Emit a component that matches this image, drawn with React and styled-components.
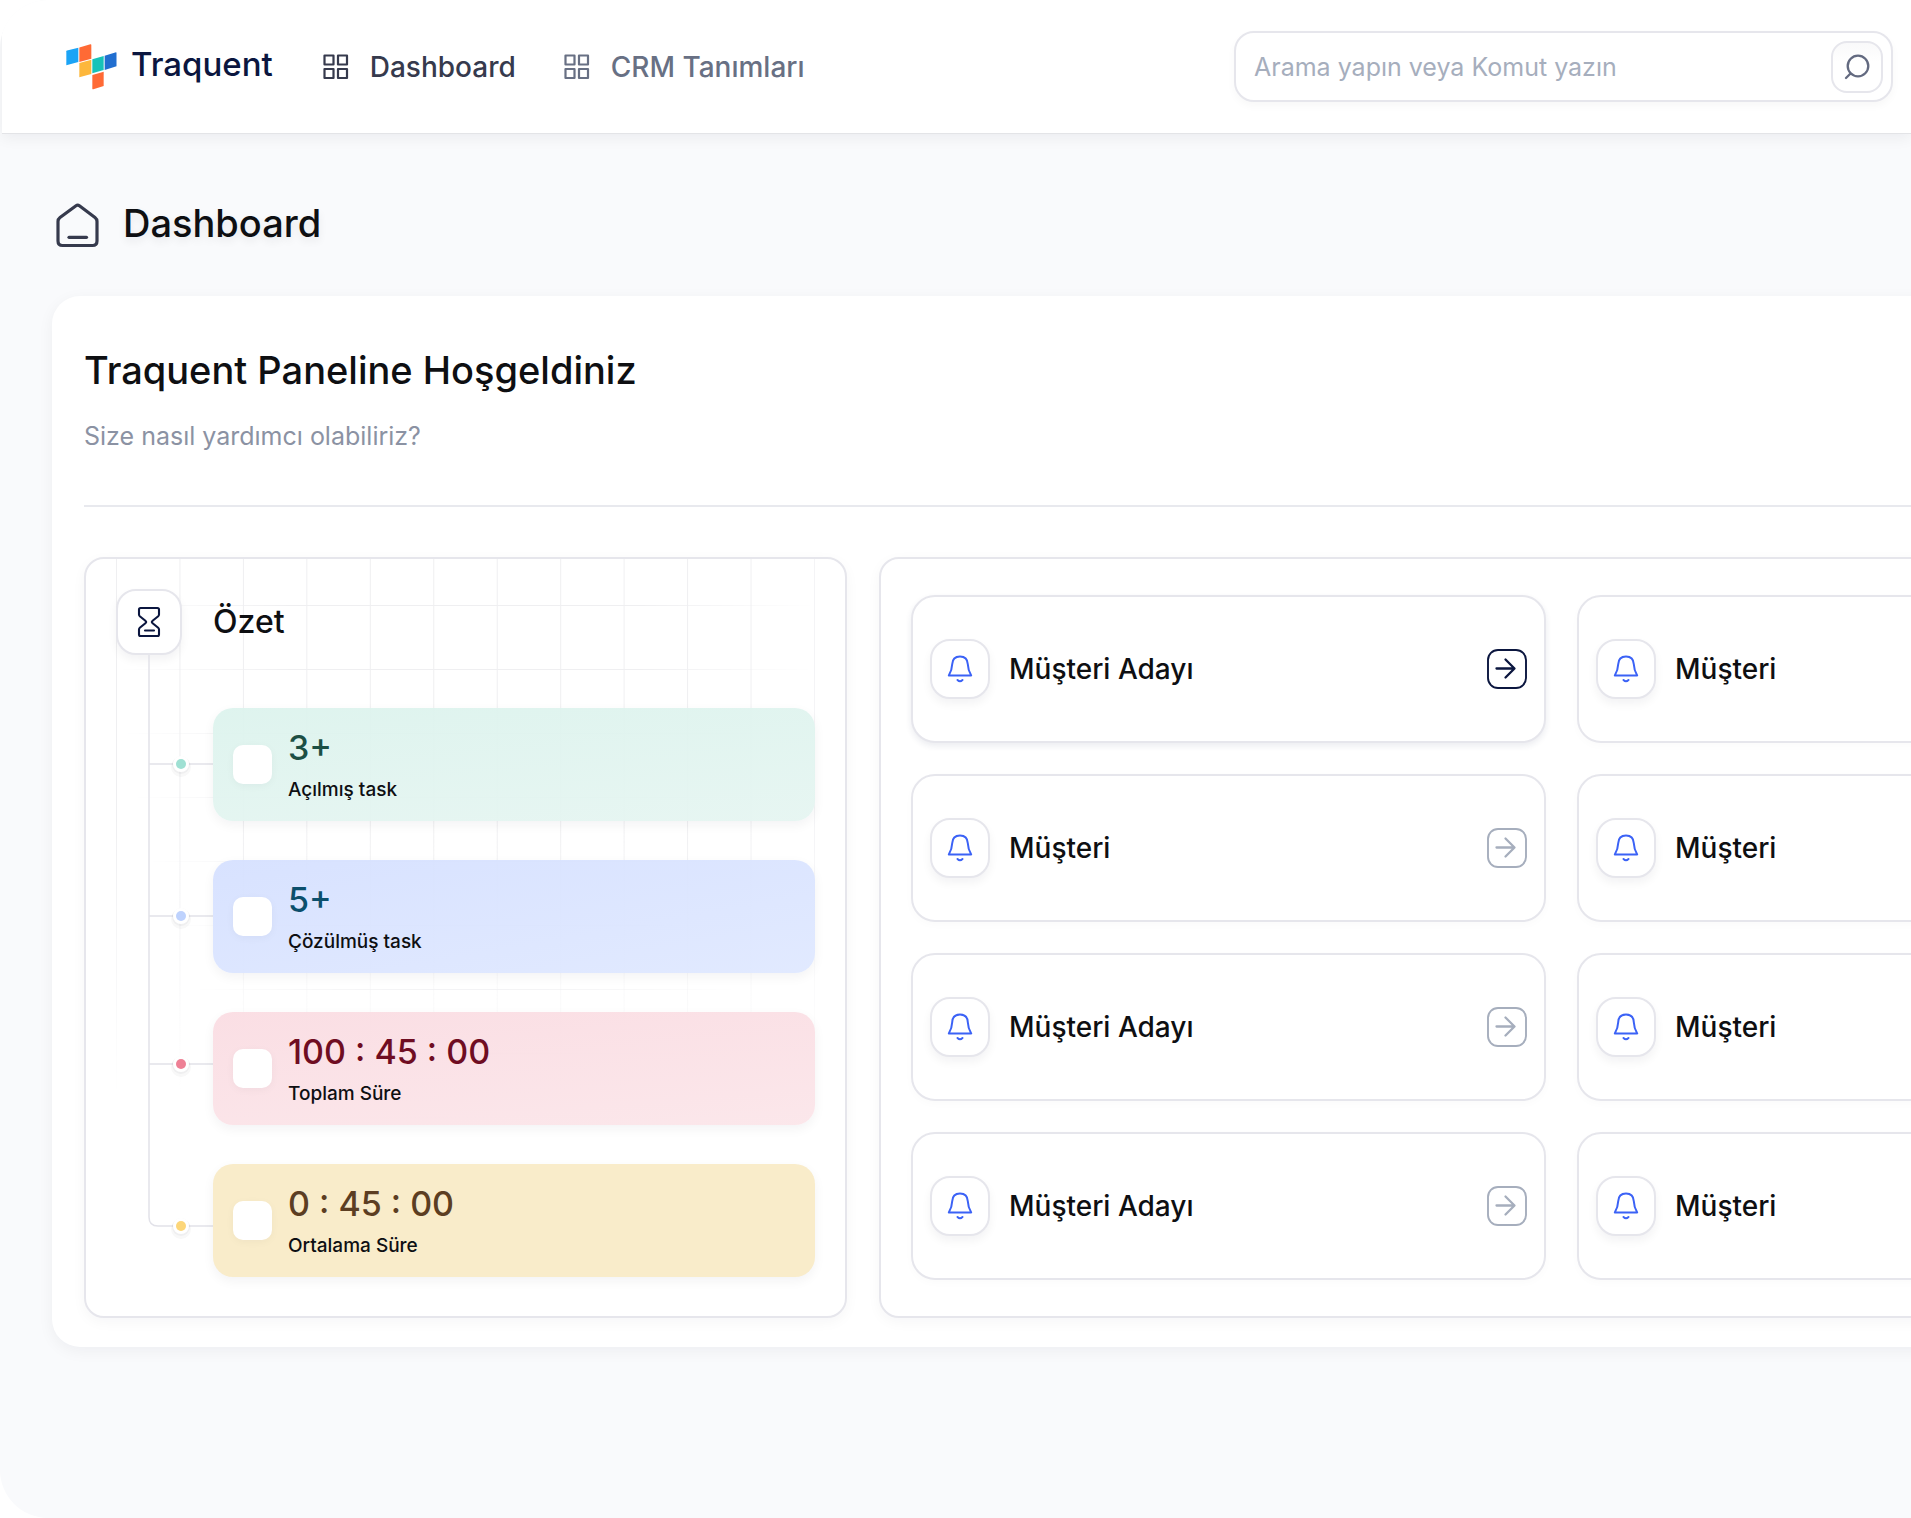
import React from "react";
import styled, { createGlobalStyle } from "styled-components";

const GlobalStyle = createGlobalStyle`
  *, *::before, *::after { box-sizing: border-box; }
  body {
    margin: 0;
    background: #ffffff;
    color: #0e0f12;
    font-family: Inter, "Liberation Sans", sans-serif;
    font-weight: 500;
  }
  h1, h2, h3, p, ul { margin: 0; padding: 0; font-weight: 500; }
  ul { list-style: none; }
  a { color: inherit; text-decoration: none; }
  svg { display: block; flex: none; }
`;

const Shell = styled.div`
  min-height: 100vh;
  overflow: hidden;
  border-radius: 48px 0 0 48px;
  background: #f9fafc;
`;

const Header = styled.header`
  display: flex;
  align-items: center;
  height: 134px;
  margin-left: 2px;
  padding: 0 18px 0 64px;
  background: #ffffff;
  border-bottom: 1px solid #e3e4e7;
  box-shadow: 0 4px 14px rgba(20, 24, 40, 0.06);
`;

const Brand = styled.a`
  display: flex;
  align-items: flex-start;
  gap: 14px;
  color: #0b163f;
  font-size: 33px;
  line-height: 40px;
`;

const Nav = styled.nav`
  display: flex;
  gap: 48px;
  margin-left: 50px;
`;

const NavLink = styled.a`
  display: flex;
  align-items: center;
  gap: 21px;
  font-size: 28px;
  line-height: 36px;
  color: ${(p) => (p.$active ? "#363a4d" : "#687084")};
`;

const Search = styled.form`
  display: flex;
  align-items: center;
  width: 659px;
  height: 71px;
  margin-left: auto;
  padding: 0 8px 0 18px;
  border: 2px solid #e6e6ec;
  border-radius: 20px;
  background: #ffffff;
  box-shadow: 0 4px 8px rgba(20, 24, 40, 0.03);
`;

const SearchInput = styled.input`
  flex: 1;
  min-width: 0;
  padding: 0;
  border: 0;
  outline: 0;
  background: transparent;
  color: #363a4d;
  font: 400 25px/36px Inter, "Liberation Sans", sans-serif;
  &::placeholder { color: #a6aebd; opacity: 1; }
`;

const SearchButton = styled.button`
  display: grid;
  place-items: center;
  width: 52px;
  height: 52px;
  padding: 0;
  border: 2px solid #e6e6ec;
  border-radius: 16px;
  background: linear-gradient(#f9f9fa, #ffffff 40%);
  color: #636a80;
`;

const PageTitle = styled.div`
  display: flex;
  align-items: flex-start;
  gap: 23px;
  padding: 69px 56px 48px;
  color: #363a4d;
`;

const PageHeading = styled.h1`
  color: #0e0f12;
  font-size: 38px;
  line-height: 40px;
  text-shadow: 0 4px 8px rgba(20, 24, 40, 0.08);
`;

const Board = styled.main`
  width: max-content;
  min-width: 100%;
  margin-left: 52px;
  padding: 50px 32px 29px;
  border-radius: 28px;
  background: #ffffff;
  box-shadow: 0 4px 16px rgba(20, 24, 40, 0.05);
`;

const Intro = styled.div`
  display: grid;
  gap: 26px;
  padding-bottom: 53px;
  margin-bottom: 50px;
  border-bottom: 2px solid #e8e9ee;
`;

const IntroTitle = styled.h2`
  font-size: 38px;
  line-height: 48px;
`;

const IntroText = styled.p`
  color: #8b92a3;
  font-size: 25px;
  font-weight: 400;
  line-height: 32px;
`;

const Panels = styled.div`
  display: flex;
  gap: 32px;
`;

const Panel = styled.section`
  border: 2px solid #e6e6ec;
  border-radius: 20px;
  background: #ffffff;
  box-shadow: 0 4px 14px rgba(20, 24, 40, 0.04);
`;

const SummaryPanel = styled(Panel)`
  position: relative;
  display: flex;
  width: 763px;
  padding: 30px 30px 38px;
  &::before, &::after {
    content: "";
    position: absolute;
    inset: 0 30px 190px;
  }
  &::before {
    border-right: 1px solid #f4f4f6;
    background: linear-gradient(90deg, #efeff1 1px, transparent 1px) 0 0 / calc(100% / 11) 100%;
    mask-image: linear-gradient(#000 45%, transparent 95%);
  }
  &::after {
    background: linear-gradient(transparent 46px, #efeff1 46px, #efeff1 47px, transparent 47px) 0 0 / 100% 64px;
    mask-image: radial-gradient(ellipse 50% 105% at 50% 10%, #000 50%, transparent 100%);
  }
`;

const Rail = styled.div`
  position: relative;
  z-index: 1;
  width: 97px;
`;

const IconTile = styled.span`
  display: grid;
  place-items: center;
  flex: none;
  width: ${(p) => p.$size}px;
  height: ${(p) => p.$size}px;
  border: 2px solid #e6e6ec;
  border-radius: 20px;
  background: #ffffff;
  box-shadow: 0 5px 10px rgba(20, 24, 40, 0.05);
`;

const Summary = styled.div`
  position: relative;
  z-index: 1;
  flex: 1;
`;

const SummaryTitle = styled.h3`
  margin-bottom: 53px;
  font-size: 32px;
  line-height: 66px;
`;

const StatList = styled.ul`
  display: grid;
  gap: 39px;
`;

const Stat = styled.li`
  display: flex;
  align-items: center;
  gap: 16px;
  height: 113px;
  padding: 0 20px;
  border-radius: 20px;
  background: ${(p) => p.$fill};
  box-shadow: 0 4px 12px rgba(20, 24, 40, 0.05);
`;

const StatTile = styled.span`
  width: 39px;
  height: 39px;
  border-radius: 10px;
  background: #ffffff;
  box-shadow: 0 2px 8px rgba(20, 24, 40, 0.04);
`;

const StatText = styled.div`
  display: grid;
  gap: 6px;
`;

const StatValue = styled.p`
  color: ${(p) => p.$ink};
  font-size: 34px;
  line-height: 44px;
`;

const StatLabel = styled.p`
  font-size: 19px;
  line-height: 28px;
`;

const LinkPanel = styled(Panel)`
  padding: 36px 30px;
`;

const LinkGrid = styled.div`
  display: grid;
  grid-template-columns: repeat(2, 635px);
  grid-auto-rows: 148px;
  gap: 31px;
`;

const LinkCard = styled.a`
  display: flex;
  align-items: center;
  gap: 19px;
  padding: 0 17px;
  border: 2px solid #e6e6ec;
  border-radius: 24px;
  background: #ffffff;
  box-shadow: ${(p) =>
    p.$active ? "0 3px 6px rgba(30, 40, 90, 0.09)" : "0 3px 8px rgba(20, 24, 40, 0.02)"};
  color: ${(p) => (p.$active ? "#0b163f" : "#a6aebd")};
`;

const LinkLabel = styled.span`
  flex: 1;
  color: #0e0f12;
  font-size: 28px;
  line-height: 36px;
`;

const Logo = () => (
  <svg width="51" height="46" viewBox="0 0 153 138" aria-hidden="true">
    <path fill="#1ba4f6" d="M1 22q0-2 2-2.500L37 11v43L1 64z" />
    <path fill="#ff6a35" d="M40 10.500 73 1q3-.5 3 2v41L40 54z" />
    <path fill="#fdb73c" d="M40 57l36-10v43L40 100z" />
    <path fill="#17c3b8" d="M79 46l34-10v42L79 88z" />
    <path fill="#216fd0" d="M116 35l34-10q1.500 0 1.500 2v40L116 78z" />
    <path fill="#ff6a35" d="M79 93l34-10v43L82 136q-3 0-3-2z" />
  </svg>
);

const GridIcon = () => (
  <svg width="26" height="26" viewBox="0 0 26 26" fill="none" stroke="currentColor" strokeWidth="2.200" strokeLinejoin="round" aria-hidden="true">
    <path d="M1.500 1.500h9v9h-9zM15 1.500h9v9h-9zM1.500 15h9v9h-9zM15 15h9v9h-9z" />
  </svg>
);

const SearchIcon = () => (
  <svg width="26" height="26" viewBox="0 0 26 26" fill="none" stroke="currentColor" strokeWidth="2.300" strokeLinecap="round" aria-hidden="true">
    <circle cx="14" cy="12" r="10.300" />
    <path d="M6.500 19.500 2 24" />
  </svg>
);

const HouseIcon = () => (
  <svg width="44" height="45" viewBox="0 0 44 45" fill="none" stroke="currentColor" strokeWidth="3.200" strokeLinecap="round" strokeLinejoin="round" aria-hidden="true">
    <path d="M2 18.500q0-2.500 2-4L20 2.800q1.700-1.200 3.400 0L39 14.500q2 1.500 2 4V38q0 4.500-4.500 4.500h-30Q2 42.500 2 38z" />
    <path d="M13 34.300h17.500" />
  </svg>
);

const HourglassIcon = () => (
  <svg width="24" height="32" viewBox="0 0 24 32" fill="none" stroke="#0b163f" strokeWidth="2.100" strokeLinecap="round" strokeLinejoin="round" aria-hidden="true">
    <path d="M3.500 2h17q1.500 0 1.500 1.500v5q0 1-.8 1.700l-5.600 4.600q-1.600 1.200 0 2.400l5.600 4.600q.8.700.8 1.700v5q0 1.500-1.500 1.500h-17Q2 30 2 28.500v-5q0-1 .8-1.700l5.600-4.600q1.600-1.200 0-2.400L2.800 10.200Q2 9.500 2 8.500v-5Q2 2 3.500 2z" />
    <path d="M8 24.500h9" />
  </svg>
);

const BellIcon = () => (
  <svg width="26" height="30" viewBox="0 0 26 30" fill="none" stroke="#3b62f6" strokeWidth="2" strokeLinecap="round" strokeLinejoin="round" aria-hidden="true">
    <path d="M1.800 21.500C4.300 17.500 5 15 5.200 10.300 5.400 5.300 8.500 2.500 13 2.500s7.600 2.800 7.800 7.800c.2 4.700.9 7.200 3.400 11.200z" />
    <path d="M10.500 26q2.500 2.400 5 0" />
  </svg>
);

const ArrowIcon = () => (
  <svg width="40" height="40" viewBox="0 0 40 40" fill="none" stroke="currentColor" strokeLinecap="round" strokeLinejoin="round" aria-hidden="true">
    <rect x="1" y="1" width="38" height="38" rx="10" strokeWidth="1.900" />
    <path strokeWidth="2.300" d="M9.500 19.500H27M18.500 10.500l9 9-9 9" />
  </svg>
);

const branches = [
  { y: 109, color: "#9fe0d3" },
  { y: 261, color: "#bed2fd" },
  { y: 409, color: "#ee8095" },
  { y: 571, color: "#fcd679" },
];

const Connector = () => (
  <svg width="97" height="600" viewBox="0 0 97 600" fill="none" aria-hidden="true">
    <g stroke="#e2e2e9" strokeWidth="1.500">
      <path d="M33 0V562q0 9 9 9H97" />
      <path d="M33 109H97M33 261H97M33 409H97" />
    </g>
    {branches.map((b) => (
      <g key={b.y}>
        <circle cx="65" cy={b.y + 3} r="10" fill="#141828" opacity=".03" />
        <circle cx="65" cy={b.y + 1} r="9" fill="#141828" opacity=".04" />
        <circle cx="65" cy={b.y} r="8" fill="#ffffff" />
        <circle cx="65" cy={b.y} r="5" fill={b.color} />
      </g>
    ))}
  </svg>
);

const stats = [
  { value: "3+", label: "Açılmış task", ink: "#1c4f44", fill: "linear-gradient(175deg, rgba(220,243,237,.93), rgba(229,245,241,.93))" },
  { value: "5+", label: "Çözülmüş task", ink: "#0b4f6c", fill: "linear-gradient(170deg, rgba(213,224,255,.93), rgba(223,232,255,.93))" },
  { value: "100 : 45 : 00", label: "Toplam Süre", ink: "#6f0d22", fill: "linear-gradient(175deg, rgba(250,220,226,.93), rgba(251,229,233,.93))" },
  { value: "0 : 45 : 00", label: "Ortalama Süre", ink: "#5c3e22", fill: "#f9ecca" },
];

const links = [
  "Müşteri Adayı", "Müşteri",
  "Müşteri", "Müşteri",
  "Müşteri Adayı", "Müşteri",
  "Müşteri Adayı", "Müşteri",
];

export default function App() {
  return (
    <Shell>
      <GlobalStyle />
      <Header>
        <Brand href="#">
          <Logo />
          Traquent
        </Brand>
        <Nav>
          <NavLink href="#" $active>
            <GridIcon />
            Dashboard
          </NavLink>
          <NavLink href="#">
            <GridIcon />
            CRM Tanımları
          </NavLink>
        </Nav>
        <Search onSubmit={(e) => e.preventDefault()}>
          <SearchInput
            type="text"
            aria-label="Arama yapın veya Komut yazın"
            placeholder="Arama yapın veya Komut yazın"
          />
          <SearchButton type="submit" aria-label="Arama">
            <SearchIcon />
          </SearchButton>
        </Search>
      </Header>

      <PageTitle>
        <HouseIcon />
        <PageHeading>Dashboard</PageHeading>
      </PageTitle>

      <Board>
        <Intro>
          <IntroTitle>Traquent Paneline Hoşgeldiniz</IntroTitle>
          <IntroText>Size nasıl yardımcı olabiliriz?</IntroText>
        </Intro>
        <Panels>
          <SummaryPanel>
            <Rail>
              <IconTile $size={66}>
                <HourglassIcon />
              </IconTile>
              <Connector />
            </Rail>
            <Summary>
              <SummaryTitle>Özet</SummaryTitle>
              <StatList>
                {stats.map((s) => (
                  <Stat key={s.label} $fill={s.fill}>
                    <StatTile />
                    <StatText>
                      <StatValue $ink={s.ink}>{s.value}</StatValue>
                      <StatLabel>{s.label}</StatLabel>
                    </StatText>
                  </Stat>
                ))}
              </StatList>
            </Summary>
          </SummaryPanel>
          <LinkPanel>
            <LinkGrid>
              {links.map((label, i) => (
                <LinkCard key={i} href="#" $active={i === 0}>
                  <IconTile $size={60}>
                    <BellIcon />
                  </IconTile>
                  <LinkLabel>{label}</LinkLabel>
                  <ArrowIcon />
                </LinkCard>
              ))}
            </LinkGrid>
          </LinkPanel>
        </Panels>
      </Board>
    </Shell>
  );
}
